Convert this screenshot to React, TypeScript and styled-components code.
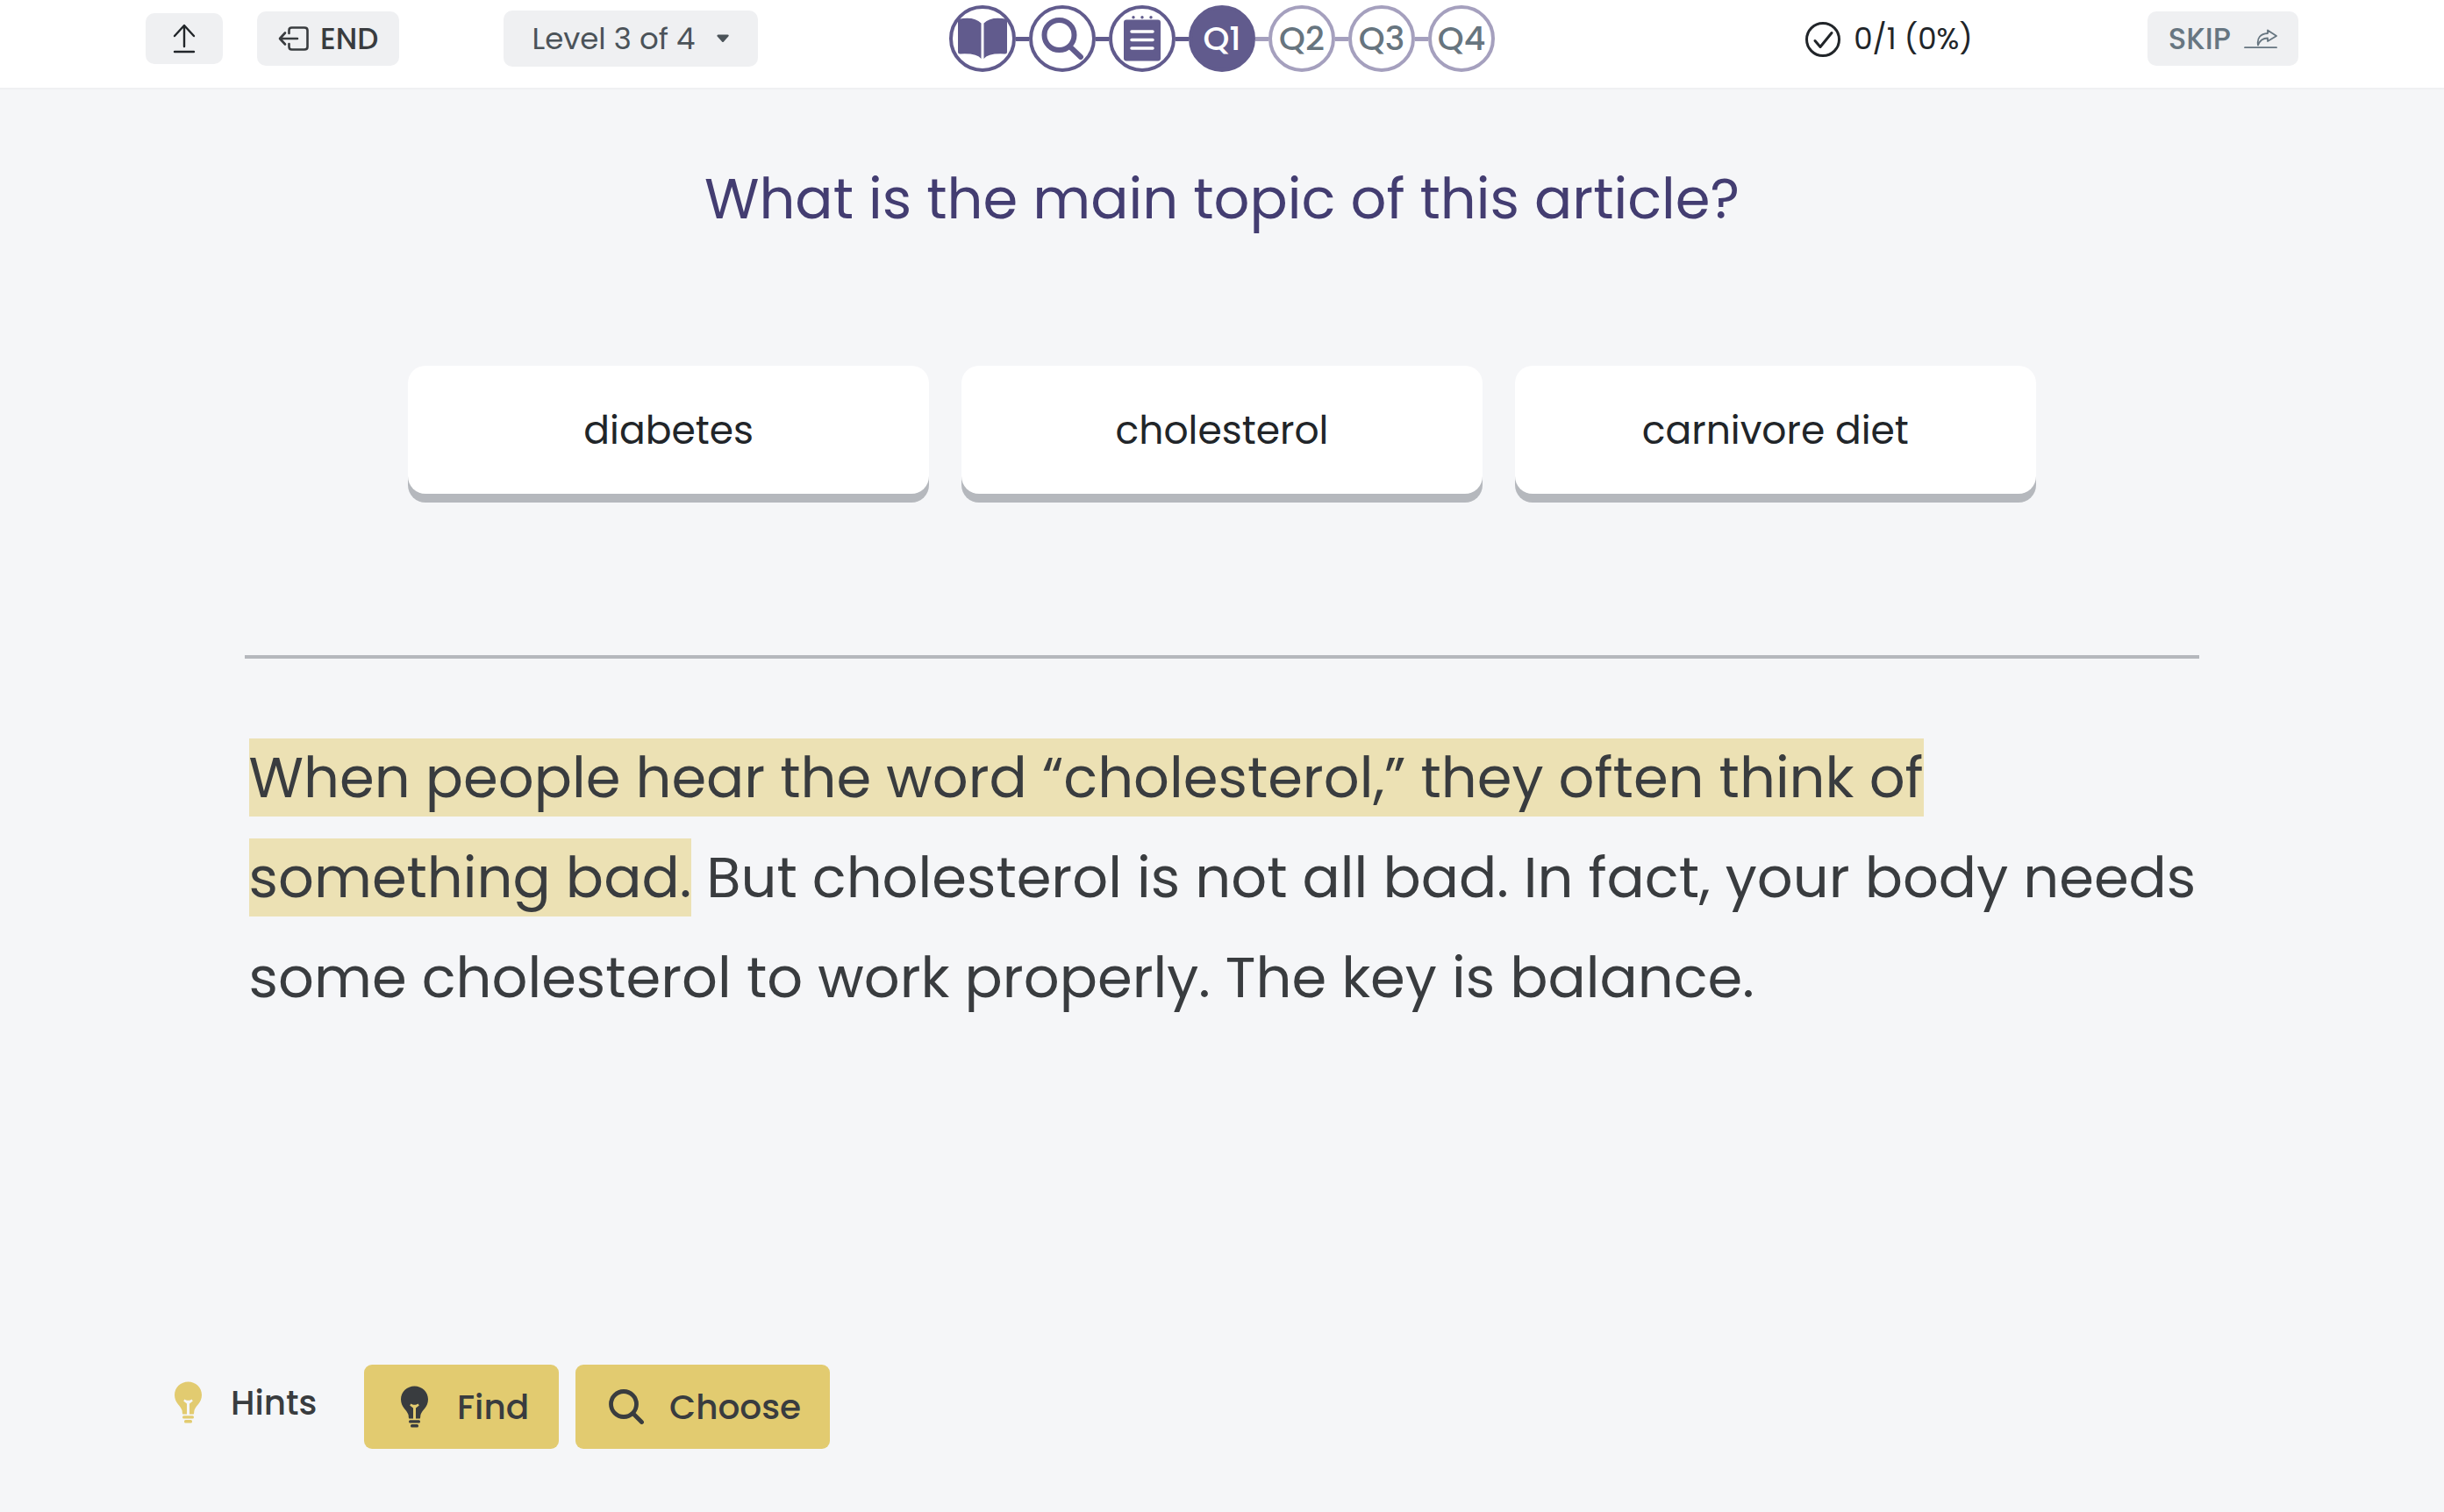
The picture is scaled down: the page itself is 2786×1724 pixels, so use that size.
import React from "react";
import styled, { createGlobalStyle } from "styled-components";

const GlobalStyle = createGlobalStyle`
  *, *::before, *::after { box-sizing: border-box; }
  body { margin: 0; background: #f5f6f8; }
  body, button, select { font-family: Poppins, Inter, "Open Sans", sans-serif; }
`;

const Page = styled.div`
  display: flex;
  flex-direction: column;
  min-height: 100vh;
`;

const Header = styled.header`
  display: grid;
  grid-template-columns: 1fr auto 1fr;
  align-items: center;
  padding: 6px 166px 18px;
  background: #fff;
  border-bottom: 2px solid #eff0f2;
`;

const HeaderGroup = styled.div<{ $end?: boolean; $gap: number }>`
  display: flex;
  align-items: center;
  justify-content: ${(p) => (p.$end ? "flex-end" : "flex-start")};
  gap: ${(p) => p.$gap}px;
`;

const BarButton = styled.button<{ $muted?: boolean }>`
  display: flex;
  align-items: center;
  justify-content: center;
  height: 62px;
  padding: 0 24px;
  border: 0;
  border-radius: 10px;
  background: #eff0f2;
  color: ${(p) => (p.$muted ? "#677681" : "#393c3f")};
  font-size: 34px;
  font-weight: 500;
  gap: ${(p) => (p.$muted ? 15 : 12)}px;
`;

const IconButton = styled(BarButton)`
  width: 88px;
  height: 58px;
  padding: 0;
  color: #212529;
`;

const LevelField = styled.label`
  display: grid;
  align-items: center;
  margin-left: 80px;
  > * { grid-area: 1 / 1; }
  svg { justify-self: end; margin-right: 32px; pointer-events: none; }
`;

const LevelSelect = styled.select`
  appearance: none;
  width: 290px;
  height: 64px;
  padding: 0 32px;
  border: 0;
  border-radius: 10px;
  background: #eff0f2;
  color: #4b5359;
  font-size: 34px;
`;

const Steps = styled.ol`
  display: flex;
  align-items: center;
  margin: 0;
  padding: 0;
  list-style: none;
`;

type StepState = "done" | "current" | "next";
const stepInk = (s: StepState) => (s === "next" ? "#a5a0be" : "#615b8d");

const Step = styled.li<{ $state: StepState }>`
  display: flex;
  align-items: center;
  &:not(:first-child)::before {
    content: "";
    width: 15px;
    height: 5px;
    background: ${(p) => stepInk(p.$state)};
  }
`;

const StepDot = styled.span<{ $state: StepState }>`
  display: grid;
  place-items: center;
  width: 76px;
  height: 76px;
  border: 4px solid ${(p) => stepInk(p.$state)};
  border-radius: 50%;
  background: ${(p) => (p.$state === "current" ? "#615b8d" : "#fff")};
  color: ${(p) => (p.$state === "current" ? "#fff" : p.$state === "done" ? "#615b8d" : "#67757f")};
  font-size: 38px;
  font-weight: 500;
  line-height: 1;
`;

const Score = styled.div`
  display: flex;
  align-items: center;
  gap: 14px;
  color: #212529;
  font-size: 34px;
`;

const Question = styled.h1`
  margin: 85px 0 150px;
  color: #433d71;
  font-size: 64px;
  font-weight: 400;
  line-height: 80px;
  text-align: center;
`;

const Answers = styled.div`
  display: grid;
  grid-template-columns: repeat(3, 1fr);
  gap: 37px;
  width: 66.6%;
  margin: 0 auto;
`;

const Answer = styled.button`
  height: 146px;
  padding: 0;
  border: 0;
  border-radius: 20px;
  background: #fff;
  box-shadow: 0 10px 0 #b5b8bd;
  color: #212529;
  font-size: 44px;
`;

const Passage = styled.section`
  margin: 184px 10% 0;
  border-top: 4px solid #b5b8bd;
  padding: 79px 0 0 5px;
`;

const Text = styled.p`
  margin: 0;
  color: #393c3f;
  font-size: 64px;
  line-height: 114px;
`;

const Highlight = styled.mark`
  background: #ece1b4;
  color: inherit;
`;

const Hints = styled.footer`
  display: flex;
  align-items: flex-start;
  gap: 19px;
  margin-top: auto;
  padding: 0 199px 72px;
`;

const HintsLabel = styled.div`
  display: flex;
  align-items: center;
  gap: 33px;
  height: 86px;
  width: 197px;
  color: #393c3f;
  font-size: 39px;
  font-weight: 500;
  > svg { color: #e2cb70; }
`;

const HintButton = styled.button<{ $wide?: boolean }>`
  display: flex;
  align-items: center;
  gap: ${(p) => (p.$wide ? 29 : 33)}px;
  width: ${(p) => (p.$wide ? 290 : 222)}px;
  height: 96px;
  padding: 0 0 0 ${(p) => (p.$wide ? 38 : 42)}px;
  border: 0;
  border-radius: 9px;
  background: #e2cb70;
  color: #393c3f;
  font-size: 39px;
  font-weight: 500;
`;

const UploadIcon = () => (
  <svg width="28" height="34" viewBox="0 0 28 34" fill="none" stroke="currentColor" strokeWidth="2.4" strokeLinecap="round" strokeLinejoin="round">
    <path d="M14 26V3M3 14 14 2l11 12" />
    <path d="M3 32h22" />
  </svg>
);

const ExitIcon = () => (
  <svg width="36" height="30" viewBox="0 0 36 30" fill="none" stroke="currentColor" strokeWidth="2.6" strokeLinecap="round" strokeLinejoin="round">
    <path d="M12.500 9V5.500Q12.500 2.500 15.500 2.500H30Q33.500 2.500 33.500 5.500V24.500Q33.500 27.500 30 27.500H15.500Q12.500 27.500 12.500 24.500V21" />
    <path d="M22 15H2.500M8 8.500 2 15l6 6.500" />
  </svg>
);

const Caret = () => (
  <svg width="16" height="10" viewBox="0 0 16 10" fill="#4b5359">
    <path d="M2.500.5h11q2 .4.8 2L9 8.600q-1 1-2 0L1.700 2.500Q.7.900 2.500.5Z" />
  </svg>
);

const BookIcon = () => (
  <svg width="56" height="48" viewBox="0 0 56 48" fill="currentColor">
    <path d="M0 2Q18-2 26.500 6.500V47Q22 40.500 2.500 41.500 0 41.500 0 39Z" />
    <path d="M56 2Q38-2 29.500 6.500V47Q34 40.500 53.500 41.500 56 41.500 56 39Z" />
  </svg>
);

const StepSearchIcon = () => (
  <svg width="48" height="48" viewBox="0 0 48 48" fill="none" stroke="currentColor">
    <circle cx="20.500" cy="20" r="17" strokeWidth="6" />
    <path d="M32.500 33 45 45" strokeWidth="6" strokeLinecap="round" />
  </svg>
);

const NotesIcon = () => (
  <svg width="42" height="52" viewBox="0 0 42 52" fill="currentColor">
    <circle cx="11" cy="1.700" r="1.700" />
    <circle cx="21" cy="1.700" r="1.700" />
    <circle cx="31" cy="1.700" r="1.700" />
    <rect y="4.500" width="42" height="47" rx="3" />
    <path d="M9 18h24M9 27.500h24M9 37h24" stroke="#fff" strokeWidth="3.500" strokeLinecap="round" />
  </svg>
);

const CheckIcon = () => (
  <svg width="42" height="42" viewBox="0 0 42 42" fill="none" stroke="currentColor" strokeWidth="3" strokeLinecap="round" strokeLinejoin="round">
    <circle cx="21" cy="22" r="18.500" />
    <path d="m12 23.500 6 7L31 14.500" />
  </svg>
);

const SkipIcon = () => (
  <svg width="38" height="23" viewBox="0 0 38 23" fill="none" stroke="currentColor" strokeWidth="1.800" strokeLinejoin="round" strokeLinecap="round">
    <path d="M1 21.200h36" />
    <path d="M16 18.500C14.500 10 19 5.500 27 5V1.500L37 8l-10 6V10.500C21 10.500 18 13 16 18.500Z" />
  </svg>
);

const BulbIcon = () => (
  <svg width="31" height="48" viewBox="0 0 31 48" fill="currentColor">
    <path d="M15.500.5C24 .5 31 7 31 15.500c0 9-6.500 11.500-8.500 17.500-.4 2-.1 3-.8 4.500H17V25.500l3.800-3-1.200-2c-2.200 1.700-6 1.700-8.200 0l-1.200 2 3.800 3V37.500H9.300c-.7-1.500-.4-2.500-.8-4.500C6.500 27 0 24.500 0 15.500 0 7 7 .5 15.500.5Z" />
    <rect x="9" y="39.300" width="13" height="3.200" rx="1.500" />
    <rect x="11" y="44.100" width="9" height="3.400" rx="1.500" />
  </svg>
);

const FindIcon = () => (
  <svg width="40" height="40" viewBox="0 0 40 40" fill="none" stroke="currentColor" strokeLinecap="round">
    <circle cx="17" cy="17" r="14.500" strokeWidth="4.800" />
    <path d="M28 28l9.500 9.500" strokeWidth="4.800" />
  </svg>
);

const steps: { label: string; state: StepState; icon?: React.ReactNode }[] = [
  { label: "Read", state: "done", icon: <BookIcon /> },
  { label: "Search", state: "done", icon: <StepSearchIcon /> },
  { label: "Notes", state: "done", icon: <NotesIcon /> },
  { label: "Q1", state: "current" },
  { label: "Q2", state: "next" },
  { label: "Q3", state: "next" },
  { label: "Q4", state: "next" },
];

const answers = ["diabetes", "cholesterol", "carnivore diet"];

export default function App() {
  return (
    <Page>
      <GlobalStyle />
      <Header>
        <HeaderGroup $gap={39}>
          <IconButton type="button" aria-label="Upload">
            <UploadIcon />
          </IconButton>
          <BarButton type="button">
            <ExitIcon />
            END
          </BarButton>
          <LevelField>
            <LevelSelect defaultValue="3" aria-label="Level">
              <option value="3">Level 3 of 4</option>
            </LevelSelect>
            <Caret />
          </LevelField>
        </HeaderGroup>
        <Steps>
          {steps.map((s) => (
            <Step key={s.label} $state={s.state}>
              <StepDot $state={s.state} aria-label={s.label}>
                {s.icon ?? s.label}
              </StepDot>
            </Step>
          ))}
        </Steps>
        <HeaderGroup $end $gap={199}>
          <Score>
            <CheckIcon />
            0/1 (0%)
          </Score>
          <BarButton type="button" $muted>
            SKIP
            <SkipIcon />
          </BarButton>
        </HeaderGroup>
      </Header>
      <main>
        <Question>What is the main topic of this article?</Question>
        <Answers>
          {answers.map((a) => (
            <Answer key={a} type="button">
              {a}
            </Answer>
          ))}
        </Answers>
        <Passage>
          <Text>
            <Highlight>
              When people hear the word “cholesterol,” they often think of
              something bad.
            </Highlight>{" "}
            But cholesterol is not all bad. In fact, your body needs
            some cholesterol to work properly. The key is balance.
          </Text>
        </Passage>
      </main>
      <Hints>
        <HintsLabel>
          <BulbIcon />
          Hints
        </HintsLabel>
        <HintButton type="button">
          <BulbIcon />
          Find
        </HintButton>
        <HintButton type="button" $wide>
          <FindIcon />
          Choose
        </HintButton>
      </Hints>
    </Page>
  );
}
